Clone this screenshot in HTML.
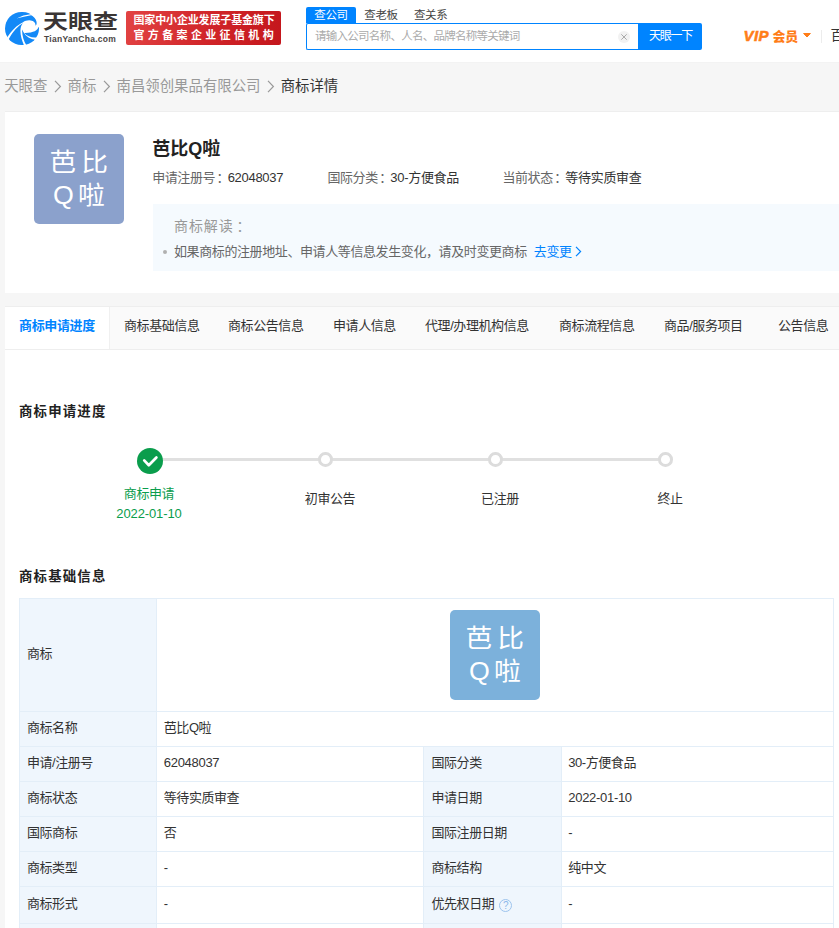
<!DOCTYPE html>
<html lang="zh-CN">
<head>
<meta charset="utf-8">
<title>芭比Q啦 - 商标详情 - 天眼查</title>
<style>
*{box-sizing:border-box;margin:0;padding:0}
html,body{width:839px;height:928px;overflow:hidden}
body{background:#f6f6f6;font-family:"Liberation Sans","Noto Sans CJK SC",sans-serif;color:#333;font-size:13px;position:relative}
a{text-decoration:none;color:inherit}
.abs{position:absolute;white-space:nowrap}

/* header */
.header{position:absolute;left:0;top:0;width:839px;height:62px;background:#fff;box-shadow:0 0 1px #e8e8e8}
.logo-icon{position:absolute;left:5.2px;top:11.5px;width:33.7px;height:33.7px;border-radius:50%;overflow:hidden}
.logo-cn{left:43.2px;top:6.5px;font-size:20px;line-height:30px;font-weight:700;color:#3a3534;letter-spacing:0;transform:scaleX(1.25);transform-origin:0 0}
.logo-en{left:44px;top:33.5px;font-size:8.5px;line-height:10px;font-weight:700;color:#4a4544;letter-spacing:.27px}
.badge{position:absolute;left:126px;top:11px;width:155px;height:34px;border-radius:2px;background:linear-gradient(100deg,#e24343 0%,#d02428 55%,#c4161c 100%);color:#fff;font-weight:700;font-size:11px}
.badge div{position:absolute;left:7.5px;white-space:nowrap;line-height:14px}
.badge .l1{top:1.8px;letter-spacing:-.15px}
.badge .l2{top:17px;letter-spacing:3.35px}

.stab{position:absolute;top:7px;height:16px;font-size:11.5px;line-height:17px;color:#444;white-space:nowrap;letter-spacing:-.4px}
.stab.on{left:306px;width:50px;background:#0084ff;color:#fff;text-align:center;border-radius:2px 2px 0 0}
.sinput{position:absolute;left:306px;top:23px;width:333px;height:27px;border:1.5px solid #0084ff;border-right:none;border-radius:2px 0 0 2px;background:#fff}
.sinput span{position:absolute;left:8px;top:4px;font-size:11.5px;line-height:16px;color:#aaa;white-space:nowrap;letter-spacing:-.73px}
.clear{position:absolute;left:618px;top:30.5px;width:12px;height:12px;border-radius:50%;background:#f2f2f2}
.sbtn{position:absolute;left:638px;top:23px;width:64px;height:27px;background:#0084ff;color:#fff;border-radius:0 2px 2px 0;text-align:center;font-size:12px;line-height:27px;letter-spacing:-1.2px;padding-left:1px}
.vip{left:743.5px;top:26.6px;font-size:12.9px;line-height:18px;color:#ff7d18;font-weight:900}
.vip i{font-style:italic;font-size:15px;font-weight:700;margin-right:3.6px;letter-spacing:.4px;vertical-align:-.3px;-webkit-text-stroke:.55px #ff7d18}
.caret{position:absolute;left:802px;top:32px;width:10px;height:7px}
.hsep{position:absolute;left:821px;top:30px;width:1px;height:13px;background:#ececec}
.bai{left:830.5px;top:26px;font-size:14px;line-height:18px;color:#333}

/* breadcrumb */
.crumb{left:4.2px;top:76px;font-size:14.4px;line-height:20px;color:#999}
.crumb b{font-weight:400;color:#333}
.crumb svg{display:inline-block;vertical-align:-1.5px;margin:0 5.4px 0 6.8px}

/* card 1 */
.card1{position:absolute;left:5px;top:111px;width:834px;height:182px;background:#fff;border-top:1px solid #eee}
.tmimg{position:absolute;width:90px;height:90px;border-radius:5px;color:#fff;text-align:center;font-weight:400;font-size:25px;line-height:33.3px;padding-top:12.1px;white-space:nowrap}
.tmimg span{display:block;letter-spacing:4.6px;margin-right:-4.6px;transform:scaleX(1.07)}
.tmimg span+span{letter-spacing:4px;margin-right:-4px}
.title{left:152.2px;top:135.2px;font-size:18px;line-height:28px;font-weight:700;color:#222;letter-spacing:0}
.info{top:168px;font-size:13px;line-height:20px;color:#666;letter-spacing:-.42px}
.info b{font-weight:400;color:#333;letter-spacing:-.3px}
.tip{position:absolute;left:153px;top:204px;width:686px;height:67px;background:#f5fafe}
.tip .h{left:21px;top:12px;font-size:14px;line-height:20px;color:#999;letter-spacing:.9px}
.c{position:relative;left:3px}
.tip .dot{position:absolute;left:10px;top:46px;width:4px;height:4px;border-radius:50%;background:#b0b0b0}
.tip .t{left:21px;top:38px;font-size:13px;line-height:20px;color:#666;letter-spacing:-.4px}
.tip .t a{color:#0084ff;margin-left:7px}

/* card 2 */
.card2{position:absolute;left:5px;top:306px;width:834px;height:640px;background:#fff}
.tabs{position:absolute;left:0;top:0;width:834px;height:44px;background:#fafafa;border-top:1px solid #eee;border-bottom:1px solid #eee}
.tab{position:absolute;top:0;height:42px;line-height:38px;font-size:13px;color:#333;white-space:nowrap;letter-spacing:-.42px}
.tab.on{left:0;width:105px;background:#fff;color:#0084ff;font-weight:700;border-right:1px solid #f0f0f0;height:42px;padding-left:14px;letter-spacing:-.35px}
.sect{font-size:13.4px;line-height:20px;font-weight:700;color:#222;letter-spacing:1.2px}

.line{position:absolute;left:149px;top:457.6px;width:516px;height:3.3px;background:#e0e0e0}
.node{position:absolute;top:452px;width:14.6px;height:14.6px;border-radius:50%;background:#fff;border:3.6px solid #dcdcdc}
.done{position:absolute;left:136.5px;top:447.5px;width:26px;height:26px;border-radius:50%;background:#0a9d4c}
.plabel{position:absolute;width:120px;text-align:center;font-size:13px;line-height:20px;color:#333;white-space:nowrap;letter-spacing:-.4px}
.plabel.g{color:#0a9d4c}

/* table */
table{position:absolute;left:18.5px;top:598px;width:813.5px;border-collapse:collapse;table-layout:fixed;font-size:13px}
td{border:1px solid #e3eef8;height:35px;padding:0 0 3px 6.8px;color:#333;vertical-align:middle;white-space:nowrap;letter-spacing:-.45px;line-height:20px}
td.k{background:#eff6fd;padding-left:7.5px}
tr.t td{height:36.5px;padding-bottom:1px}
td.n{letter-spacing:-.3px}
td.img{height:113px;padding:0;position:relative}
.q{display:inline-block;width:13px;height:13px;border:1px solid #9dc4ee;border-radius:50%;color:#8bb8ea;font-size:10px;line-height:11px;text-align:center;vertical-align:-1px;margin-left:5px;letter-spacing:0}
</style>
</head>
<body>

<div class="header">
  <svg class="logo-icon" viewBox="95 100 615 615">
    <g fill="#1389f7">
      <path d="M130 572C215 435 310 345 425 287C470 256 540 240 600 265C640 285 657 320 650 353C682 325 680 275 650 228C630 195 600 172 570 160Q440 188 305 217Q420 155 580 138L580 0L0 0L0 720Z"/>
      <path d="M425 303C340 352 240 452 165 594L100 800L445 800L440 705C395 600 360 470 385 380C395 342 410 320 425 303Z"/>
      <path d="M410 420C400 500 430 620 482 702L500 800L700 800L635 603C540 590 450 530 410 420Z"/>
      <path d="M706 376C690 436 620 486 445 483C500 540 580 575 668 565L800 560L800 378Z"/>
    </g>
  </svg>
  <div class="abs logo-cn">天眼查</div>
  <div class="abs logo-en">TianYanCha.com</div>
  <div class="badge"><div class="l1">国家中小企业发展子基金旗下</div><div class="l2">官方备案企业征信机构</div></div>

  <div class="stab on">查公司</div>
  <div class="stab" style="left:364.3px">查老板</div>
  <div class="stab" style="left:414px">查关系</div>
  <div class="sinput"><span>请输入公司名称、人名、品牌名称等关键词</span></div>
  <div class="clear"><svg width="12" height="12" viewBox="0 0 12 12"><path d="M3.3 3.3l5.4 5.4M8.7 3.3l-5.4 5.4" stroke="#aaa" stroke-width="1" fill="none"/></svg></div>
  <div class="sbtn">天眼一下</div>
  <div class="abs vip"><i>VIP</i>会员</div>
  <svg class="caret" viewBox="0 0 10 7"><path d="M1.6 1.5h6.8L5 5z" fill="#ff7d18" stroke="#ff7d18" stroke-width="1" stroke-linejoin="round"/></svg>
  <div class="hsep"></div>
  <div class="abs bai">百度</div>
</div>

<div class="abs crumb">天眼查<svg width="8" height="13" viewBox="0 0 8 13"><path d="M1 .9l5.4 5.6L1 12.1" stroke="#999" stroke-width="1.2" fill="none"/></svg>商标<svg width="8" height="13" viewBox="0 0 8 13"><path d="M1 .9l5.4 5.6L1 12.1" stroke="#999" stroke-width="1.2" fill="none"/></svg>南昌领创果品有限公司<svg width="8" height="13" viewBox="0 0 8 13"><path d="M1 .9l5.4 5.6L1 12.1" stroke="#999" stroke-width="1.2" fill="none"/></svg><b>商标详情</b></div>

<div class="card1"></div>
<div class="tmimg" style="left:34px;top:134px;background:#8ba1cc"><span>芭比</span><span>Q啦</span></div>
<div class="abs title">芭比Q啦</div>
<div class="abs info" style="left:152.2px">申请注册号<span class="c" style="left:1.5px">：</span><b>62048037</b></div>
<div class="abs info" style="left:327.4px">国际分类<span class="c" style="left:1.5px">：</span><b>30-方便食品</b></div>
<div class="abs info" style="left:502.4px">当前状态<span class="c" style="left:1.5px">：</span><b>等待实质审查</b></div>
<div class="tip">
  <div class="abs h">商标解读<span class="c">：</span></div>
  <div class="dot"></div>
  <div class="abs t">如果商标的注册地址、申请人等信息发生变化，请及时变更商标<a>去变更<svg width="7" height="11" viewBox="0 0 7 11" style="vertical-align:-1px;margin-left:3px"><path d="M1 .8l4.6 4.7L1 10.2" stroke="#0084ff" stroke-width="1.2" fill="none"/></svg></a></div>
</div>

<div class="card2">
  <div class="tabs">
    <div class="tab on">商标申请进度</div>
    <div class="tab" style="left:119px">商标基础信息</div>
    <div class="tab" style="left:223px">商标公告信息</div>
    <div class="tab" style="left:328px">申请人信息</div>
    <div class="tab" style="left:420px">代理/办理机构信息</div>
    <div class="tab" style="left:554px">商标流程信息</div>
    <div class="tab" style="left:659px">商品/服务项目</div>
    <div class="tab" style="left:773px">公告信息</div>
  </div>
</div>

<div class="abs sect" style="left:19px;top:401.6px">商标申请进度</div>
<div class="line"></div>
<div class="done"><svg width="26" height="26" viewBox="0 0 26 26"><path d="M7.2 12.4L11.8 17.2L19.4 9.5" stroke="#fff" stroke-width="2.7" fill="none" stroke-linecap="round" stroke-linejoin="round"/></svg></div>
<div class="node" style="left:318px"></div>
<div class="node" style="left:488px"></div>
<div class="node" style="left:658px"></div>
<div class="plabel g" style="left:89px;top:483.5px">商标申请</div>
<div class="plabel g" style="left:89px;top:504px;letter-spacing:-.12px">2022-01-10</div>
<div class="plabel" style="left:270px;top:488.5px">初审公告</div>
<div class="plabel" style="left:440px;top:488.5px">已注册</div>
<div class="plabel" style="left:610px;top:488.5px">终止</div>

<div class="abs sect" style="left:19px;top:566.7px">商标基础信息</div>
<table>
  <colgroup><col style="width:137.5px"><col style="width:267px"><col style="width:137.5px"><col style="width:272px"></colgroup>
  <tr><td class="k" style="height:113px">商标</td><td class="img" colspan="3"><div class="tmimg" style="left:293px;top:11px;background:#7cb1db"><span>芭比</span><span>Q啦</span></div></td></tr>
  <tr><td class="k">商标名称</td><td colspan="3">芭比Q啦</td></tr>
  <tr><td class="k">申请/注册号</td><td class="n">62048037</td><td class="k">国际分类</td><td>30-方便食品</td></tr>
  <tr><td class="k">商标状态</td><td>等待实质审查</td><td class="k">申请日期</td><td class="n">2022-01-10</td></tr>
  <tr><td class="k">国际商标</td><td>否</td><td class="k">国际注册日期</td><td>-</td></tr>
  <tr><td class="k">商标类型</td><td>-</td><td class="k">商标结构</td><td>纯中文</td></tr>
  <tr class="t"><td class="k">商标形式</td><td>-</td><td class="k">优先权日期<span class="q">?</span></td><td>-</td></tr>
  <tr><td class="k">专用权期限</td><td>-</td><td class="k">后期指定日期</td><td>-</td></tr>
</table>

</body>
</html>
